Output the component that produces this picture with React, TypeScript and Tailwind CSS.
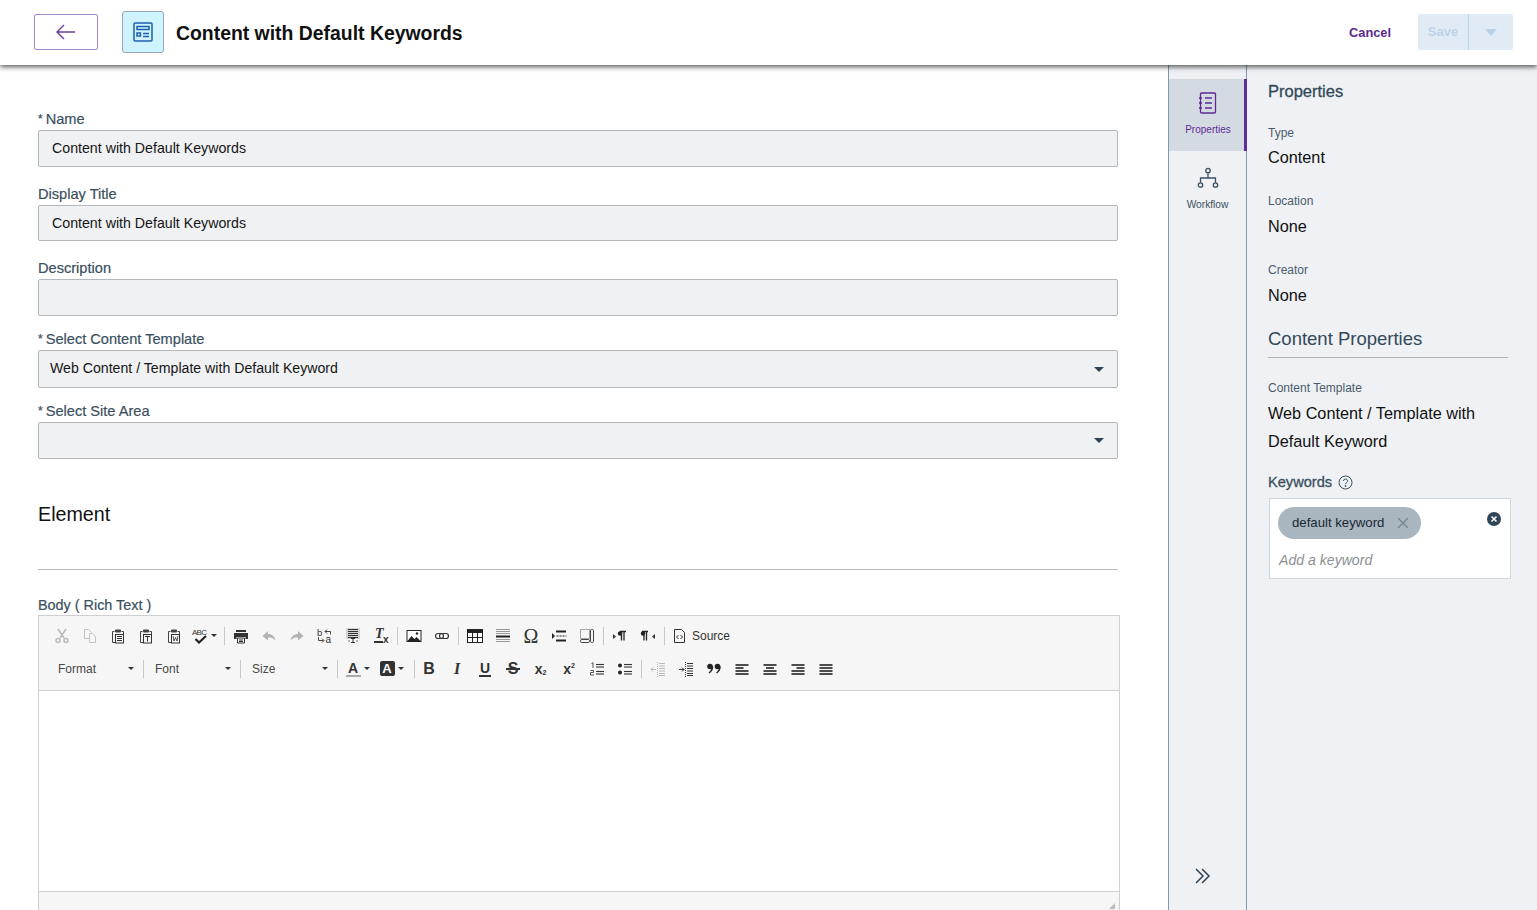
import React from "react";

const FF = "font-['Liberation_Sans',Arial,sans-serif]";

function Ic({ children, w = 16 }: { children: React.ReactNode; w?: number }) {
  return (
    <svg width={w} height={16} viewBox={`0 0 ${w} 16`} fill="none" stroke="#333" strokeWidth="1">
      {children}
    </svg>
  );
}

function TB({ children, w = "w-[28px]" }: { children: React.ReactNode; w?: string }) {
  return <div className={`${w} h-[24px] flex items-center justify-center shrink-0`}>{children}</div>;
}

const Sep = () => <div className="w-px h-[18px] bg-[#c8c8c8] mx-[2px] shrink-0" />;
const Tri = () => <span className="inline-block w-0 h-0 border-l-[3px] border-r-[3px] border-t-[3px] border-l-transparent border-r-transparent border-t-[#333] shrink-0" />;

const Paste = ({ inner }: { inner: React.ReactNode }) => (
  <Ic>
    <path d="M4.500 3.500h-2v11h3M11.500 3.500h2v3" stroke="#444" />
    <rect x="5" y="1.500" width="6" height="3" rx="1" fill="#444" stroke="none" />
    <rect x="5.500" y="6.500" width="8" height="8.500" fill="#f6f6f6" stroke="#333" />
    {inner}
  </Ic>
);

const lines = (ys: number[], x1: number, x2: number, sw = 1) =>
  ys.map((y) => <path key={y} d={`M${x1} ${y}H${x2}`} strokeWidth={sw} stroke="#333" />);

function Row1() {
  return (
    <div className="flex items-center h-[33px]">
      <TB>
        <Ic>
          <g stroke="#bbb" strokeWidth="1.600">
            <path d="M4 1l6 9M12 1L6 10" />
            <circle cx="4" cy="12.500" r="2" />
            <circle cx="12" cy="12.500" r="2" />
          </g>
        </Ic>
      </TB>
      <TB>
        <Ic>
          <g stroke="#c4c4c4" fill="#f6f6f6">
            <path d="M2.500 1.500h4l3 3v6h-7z" />
            <path d="M7.500 5.500h3l3 3v6h-6z" />
          </g>
        </Ic>
      </TB>
      <TB><Paste inner={lines([8.500, 10.500, 12.500], 7, 12)} /></TB>
      <TB><Paste inner={<path d="M7 8.500h5M9.500 8.500v5" stroke="#333" />} /></TB>
      <TB><Paste inner={<path d="M7 8l1 5 1.500-3.500L11 13l1-5" stroke="#333" strokeWidth=".8" />} /></TB>
      <TB w="w-[34px]">
        <div className="flex items-center gap-[1px] -ml-[1px]">
          <svg width={18} height={16} viewBox="0 0 18 16" fill="none">
            <text x="0" y="7" fontSize="8" fontFamily="Liberation Sans" fill="#333" textLength="15">ABC</text>
            <path d="M3.500 11l3.500 3.500L14 8" stroke="#222" strokeWidth="2.200" />
          </svg>
          <Tri />
        </div>
      </TB>
      <Sep />
      <TB>
        <Ic>
          <path d="M3 2h10v2H3z" fill="#333" stroke="none" />
          <path d="M1 5h14v6h-2.500v-2h-9v2H1z" fill="#333" stroke="none" />
          <path d="M4.500 10h7v5h-7z" fill="#f6f6f6" stroke="#333" />
          <path d="M6 12h4M6 13.500h4" stroke="#333" />
        </Ic>
      </TB>
      <TB>
        <Ic><path d="M7 3L1.500 8 7 12.500V9.500c3 0 5.500 .5 7.500 3-.5-4-3.500-6.500-7.500-6.500z" fill="#b4b4b4" stroke="none" /></Ic>
      </TB>
      <TB>
        <Ic><path d="M9 3l5.500 5L9 12.500V9.500c-3 0-5.500 .5-7.500 3 .5-4 3.500-6.500 7.500-6.500z" fill="#b4b4b4" stroke="none" /></Ic>
      </TB>
      <TB>
        <svg width={16} height={16} viewBox="0 0 16 16" fill="none">
          <text x="0" y="7.500" fontSize="9.500" fontFamily="Liberation Sans" fill="#333">b</text>
          <text x="8.500" y="15" fontSize="10" fontFamily="Liberation Sans" fill="#333">a</text>
          <path d="M8 3.500h5.500v3M10 1.500L8 3.500l2 2M1.500 9v3.500h5M5 10.500l2 2-2 2" stroke="#333" strokeWidth=".9" />
        </svg>
      </TB>
      <TB>
        <Ic>
          <rect x="1" y="0" width="14" height="11" fill="#d2d2d2" stroke="none" />
          {lines([1.500, 3.500, 5.500, 7.500, 9.500], 3, 13, 1)}
          <path d="M8 10v5M6 10.500h4M6 14.500h4" stroke="#333" />
          <path d="M3 13h2M11 13h2" stroke="#777" />
        </Ic>
      </TB>
      <TB>
        <span className="relative w-[16px] h-[16px] block">
          <span className="absolute left-[2px] top-[-2px] text-[14px] leading-[16px] italic font-bold font-['Liberation_Serif',serif] text-[#333]">T</span>
          <span className="absolute left-[1px] top-[13px] w-[9px] h-[2px] bg-[#333]" />
          <span className="absolute left-[10px] top-[7px] text-[10px] leading-[10px] font-bold text-[#333]">x</span>
        </span>
      </TB>
      <Sep />
      <TB>
        <Ic>
          <rect x="1" y="2.500" width="14" height="11" fill="#fff" stroke="#222" />
          <path d="M1.500 13l4-5 3 3 2-2 4 4z" fill="#222" stroke="none" />
          <circle cx="11" cy="5.500" r="1.200" fill="#222" stroke="none" />
        </Ic>
      </TB>
      <TB>
        <Ic>
          <rect x="1.500" y="5.500" width="8" height="5" rx="2.500" stroke="#333" strokeWidth="1.200" />
          <rect x="5.500" y="5.500" width="9" height="5" rx="2.500" stroke="#333" strokeWidth="1.200" />
        </Ic>
      </TB>
      <Sep />
      <TB>
        <Ic>
          <rect x=".5" y="1.500" width="15" height="13" fill="#fff" stroke="#222" />
          <rect x=".5" y="1.500" width="15" height="3.500" fill="#222" stroke="none" />
          <path d="M5.500 5v9M10.500 5v9M1 9.500h14" stroke="#222" />
        </Ic>
      </TB>
      <TB>
        <Ic>
          <path d="M1 1.500h14M1 3.500h14M1 5.500h14M1 11.500h14M1 13.500h14" stroke="#999" />
          <path d="M1 8.500h14" stroke="#222" strokeWidth="2" />
        </Ic>
      </TB>
      <TB><span className="text-[20px] leading-[16px] text-[#333] font-['Liberation_Serif',serif]">Ω</span></TB>
      <TB>
        <Ic>
          <path d="M1 5l3 3-3 3z" fill="#222" stroke="none" />
          <path d="M5 3.500h10M5 12.500h10" stroke="#222" strokeWidth="2" />
          <path d="M5.500 8h10" stroke="#222" strokeDasharray="2 1" />
        </Ic>
      </TB>
      <TB>
        <Ic>
          <path d="M1.500 1.500h9v9h-9z" stroke="#555" strokeDasharray="1 1" />
          <rect x="11.500" y="1.500" width="3" height="13" rx="1.200" stroke="#444" />
          <rect x="1.500" y="11.500" width="9" height="3" rx="1.200" stroke="#444" />
        </Ic>
      </TB>
      <Sep />
      <TB>
        <Ic>
          <path d="M1 6l3 2.500L1 11z" fill="#333" stroke="none" />
          <path d="M8 3.500h6M9.500 3.500v9M12 3.500v9" stroke="#222" strokeWidth="1.300" />
          <circle cx="8" cy="5.500" r="2.200" fill="#222" stroke="none" />
        </Ic>
      </TB>
      <TB>
        <Ic>
          <path d="M15 6l-3 2.500L15 11z" fill="#333" stroke="none" />
          <path d="M2 3.500h6M4 3.500v9M6.500 3.500v9" stroke="#222" strokeWidth="1.300" />
          <circle cx="3" cy="5.500" r="2.200" fill="#222" stroke="none" />
        </Ic>
      </TB>
      <Sep />
      <div className="flex items-center h-[24px] pl-[5px] gap-[4px] shrink-0">
        <Ic>
          <path d="M2.500 1.500h7l3 3v10h-10z" stroke="#333" fill="#f6f6f6" />
          <path d="M6.500 7l-2 2 2 2M8.500 7l2 2-2 2" stroke="#333" />
        </Ic>
        <span className="text-[12px] text-[#333]">Source</span>
      </div>
    </div>
  );
}

function Combo({ label, w }: { label: string; w: string }) {
  return (
    <div className={`${w} h-[24px] flex items-center justify-between pl-[9px] pr-[7px] shrink-0`}>
      <span className="text-[12px] text-[#484848]">{label}</span>
      <Tri />
    </div>
  );
}

function Row2() {
  return (
    <div className="flex items-center h-[33px]">
      <div className="w-[93px] h-[24px] flex items-center justify-between pl-[10px] pr-[7px] shrink-0">
        <span className="text-[12px] text-[#484848]">Format</span>
        <Tri />
      </div>
      <Sep />
      <Combo label="Font" w="w-[92px]" />
      <Sep />
      <Combo label="Size" w="w-[92px]" />
      <Sep />
      <TB w="w-[36px]">
        <div className="flex items-center gap-[3px] -ml-[1px]">
          <span className="flex flex-col items-center w-[15px]">
            <span className="text-[14px] leading-[14px] font-bold text-[#333]">A</span>
            <span className="w-[15px] h-[2px] bg-[#aaa]" />
          </span>
          <Tri />
        </div>
      </TB>
      <TB w="w-[36px]">
        <div className="flex items-center gap-[3px] -ml-[5px]">
          <span className="w-[15px] h-[15px] bg-[#333] rounded-[2px] flex items-center justify-center text-[13px] leading-[13px] font-bold text-white">A</span>
          <Tri />
        </div>
      </TB>
      <div className="w-px h-[18px] bg-[#c8c8c8] ml-[2px] shrink-0" />
      <TB><span className="text-[16px] leading-[16px] font-bold text-[#333]">B</span></TB>
      <TB><span className="text-[16px] leading-[16px] italic font-bold font-['Liberation_Serif',serif] text-[#333]">I</span></TB>
      <TB><span className="text-[14px] leading-[13px] font-bold text-[#333] border-b-2 border-[#333] px-[1px] mt-[1px]">U</span></TB>
      <TB>
        <span className="relative text-[16px] leading-[16px] font-bold text-[#333] block">
          S
          <span className="absolute -left-[2px] -right-[2px] top-[7px] h-[2px] bg-[#333]" />
        </span>
      </TB>
      <TB>
        <span className="flex items-end text-[#333] font-bold -ml-[1px]">
          <span className="text-[14px] leading-[14px]">x</span>
          <span className="text-[7px] leading-[7px]">2</span>
        </span>
      </TB>
      <TB>
        <span className="flex items-start text-[#333] font-bold">
          <span className="text-[14px] leading-[14px]">x</span>
          <span className="text-[7px] leading-[7px]">2</span>
        </span>
      </TB>
      <TB>
        <Ic>
          {lines([3.500, 6, 10.500, 13], 7, 15, 1.100)}
          <path d="M2.500 2.500l1.500-.8V7M1.500 9.500h3v2h-3v2.500h3.500" stroke="#444" strokeWidth=".9" />
        </Ic>
      </TB>
      <TB>
        <Ic>
          {lines([3.500, 6, 10.500, 13], 7, 15, 1.100)}
          <circle cx="3" cy="4.500" r="2" fill="#222" stroke="none" />
          <circle cx="3" cy="11.500" r="2" fill="#222" stroke="none" />
        </Ic>
      </TB>
      <Sep />
      <TB>
        <Ic>
          <g opacity=".3">
            {lines([2.500, 5, 7.500, 10, 12.500, 14.500], 9, 15, 1)}
            <path d="M7.500 1v15" stroke="#333" strokeDasharray="1 1" />
            <path d="M6 8.500H1M3 6.500l-2 2 2 2" stroke="#333" />
          </g>
        </Ic>
      </TB>
      <TB>
        <Ic>
          {lines([2.500, 5, 7.500, 10, 12.500, 14.500], 9, 15, 1)}
          <path d="M7.500 1v15" stroke="#333" strokeDasharray="1 1" />
          <path d="M1 8.500h5M4 6.500l2 2-2 2" stroke="#333" />
        </Ic>
      </TB>
      <TB>
        <Ic>
          <circle cx="4" cy="5.500" r="2.800" fill="#222" stroke="none" />
          <path d="M6.500 5.500c0 3-1.500 5-3.500 6.500" stroke="#222" strokeWidth="1.500" />
          <circle cx="11.500" cy="5.500" r="2.800" fill="#222" stroke="none" />
          <path d="M14 5.500c0 3-1.500 5-3.500 6.500" stroke="#222" strokeWidth="1.500" />
        </Ic>
      </TB>
      {[0, 1, 2, 3].map((i) => (
        <TB key={i}>
          <Ic>
            {[4, 7, 10, 13].map((y, r) => {
              const short = i !== 3 && r === 1;
              const len = short ? 8 : 13;
              const x1 = i === 0 || i === 3 ? 1.500 : i === 1 ? 8 - len / 2 : 14.500 - len;
              return <path key={y} d={`M${x1} ${y}h${len}`} stroke="#222" strokeWidth="1.600" />;
            })}
          </Ic>
        </TB>
      ))}
    </div>
  );
}

function FieldLabel({ label, req }: { label: string; req?: boolean }) {
  return (
    <div className="h-[20px] flex items-start text-[14.600px] leading-[18px] text-[#3b4f60] [-webkit-text-stroke:0.2px_#3b4f60]">
      {req && <span className="text-[12px] mr-[3px]">*</span>}
      {label}
    </div>
  );
}

function Field({ label, req, value, h, mb, tx = "" }: { label: string; req?: boolean; value?: string; h: string; mb: string; tx?: string }) {
  return (
    <div className={mb}>
      <FieldLabel label={label} req={req} />
      <div className={`${h} ${tx} bg-[#f0f1f3] border border-[#b4b8bc] rounded-[2px] flex items-center pl-[13px] text-[14.200px] text-[#161616]`}>
        {value}
      </div>
    </div>
  );
}

function SelectField({ label, value, h, mb }: { label: string; value?: string; h: string; mb: string }) {
  return (
    <div className={mb}>
      <FieldLabel label={label} req />
      <div className={`${h} bg-[#f0f1f3] border border-[#b4b8bc] rounded-[2px] flex items-center justify-between pl-[11px] pr-[13px] text-[14.150px] text-[#161616]`}>
        <span>{value}</span>
        <span className="w-0 h-0 border-l-[5px] border-r-[5px] border-t-[5px] border-l-transparent border-r-transparent border-t-[#2f4456]" />
      </div>
    </div>
  );
}

function Prop({ k, v, mb, gap }: { k: string; v: string; mb: string; gap: string }) {
  return (
    <div className={mb}>
      <div className="text-[12px] leading-[16px] text-[#4a5c6c]">{k}</div>
      <div className={`text-[16.250px] leading-[24px] text-[#111] ${gap}`}>{v}</div>
    </div>
  );
}

export default function App() {
  return (
    <div className={`h-[910px] w-[1537px] overflow-hidden bg-white flex flex-col ${FF}`}>
      <header className="relative z-10 h-[65px] shrink-0 bg-white shadow-[0_2px_5px_rgba(0,0,0,0.65)] flex items-center pl-[34px] pr-[24px] pb-[1px]">
        <button className="w-[64px] h-[36px] border border-[#a988c7] rounded-[2px] flex items-center justify-center">
          <svg width="22" height="18" viewBox="0 0 22 18" fill="none" stroke="#6b3fa0" strokeWidth="1.400">
            <path d="M2 9h18M9 2L2 9l7 7" />
          </svg>
        </button>
        <div className="ml-[24px] w-[42px] h-[42px] rounded-[3px] bg-[#cff4fe] border border-[#8fa9bb] flex items-center justify-center">
          <svg width="20" height="20" viewBox="0 0 20 20" fill="none" stroke="#1d5fa8" strokeWidth="1.500">
            <rect x="1" y="1" width="18" height="18" rx="1" />
            <rect x="4" y="4.500" width="12" height="3" />
            <rect x="4" y="11" width="3.500" height="3" />
            <path d="M10 11.500h6M10 14.500h6" />
          </svg>
        </div>
        <h1 className="ml-[12px] mt-[3px] text-[19.400px] font-bold text-[#111]">Content with Default Keywords</h1>
        <div className="ml-auto flex items-center">
          <span className="text-[12.800px] font-bold text-[#5b2a8f] mr-[27px] mt-[2px]">Cancel</span>
          <div className="w-[95px] h-[36px] bg-[#e1ebf5] rounded-[2px] flex items-center">
            <span className="w-[51px] text-center text-[13px] font-bold text-[#bfd3e8] border-r border-[#b9d3ea] leading-[36px]">Save</span>
            <span className="flex-1 flex justify-center">
              <span className="w-0 h-0 border-l-[6px] border-r-[6px] border-t-[7px] border-l-transparent border-r-transparent border-t-[#b6d1e9]" />
            </span>
          </div>
        </div>
      </header>

      <div className="flex-1 flex min-h-0">
        <main className="w-[1168px] shrink-0 pl-[38px] pr-[50px] pt-[45px] min-h-0">
          <Field label="Name" req value="Content with Default Keywords" h="h-[37px]" mb="mb-[18px]" />
          <Field label="Display Title" value="Content with Default Keywords" h="h-[36px]" tx="pt-[1px]" mb="mb-[18px]" />
          <Field label="Description" h="h-[37px]" mb="mb-[14px]" />
          <SelectField label="Select Content Template" value="Web Content / Template with Default Keyword" h="h-[38px]" mb="mb-[14px]" />
          <SelectField label="Select Site Area" h="h-[37px]" mb="mb-[41px]" />
          <div className="text-[19.700px] leading-[28px] text-[#111]">Element</div>
          <div className="h-px bg-[#b9bdc1] mt-[41px] mb-[26px]" />
          <div className="h-[19px] flex items-center text-[14.400px] text-[#3b4f60] [-webkit-text-stroke:0.2px_#3b4f60]">Body ( Rich Text )</div>
          <div className="w-[1082px] h-[400px] border border-[#cfcfcf] flex flex-col">
            <div className="bg-[#f6f6f6] border-b border-[#d1d1d1] pl-[9px] pt-[3px] h-[75px] shrink-0">
              <Row1 />
              <Row2 />
            </div>
            <div className="h-[200px] bg-white shrink-0" />
            <div className="flex-1 bg-[#f6f6f6] border-t border-[#d1d1d1] relative">
              <span className="absolute right-[4px] top-[11px] w-0 h-0 border-l-[6px] border-b-[6px] border-l-transparent border-b-[#bbb]" />
            </div>
          </div>
        </main>

        <nav className="w-[79px] shrink-0 bg-[#eff1f4] border-l border-r border-[#8199ab] flex flex-col pt-[14px]">
          <div className="h-[72px] bg-[#d3dae2] border-r-[3px] border-[#5f2a96] flex flex-col items-center pt-[13px] pl-[3px] -mr-px">
            <svg width="20" height="22" viewBox="0 0 20 22" fill="none" stroke="#5f2a96" strokeWidth="1.300">
              <rect x="2.500" y="1" width="15" height="20" rx="1" />
              <path d="M7 6h7M7 11h7M7 16h7M1 6h3M1 11h3M1 16h3" />
            </svg>
            <span className="text-[10px] leading-[12px] mt-[10px] text-[#5f2a96]">Properties</span>
          </div>
          <div className="h-[72px] flex flex-col items-center pt-[16px]">
            <svg width="22" height="22" viewBox="0 0 22 22" fill="none" stroke="#3a5060" strokeWidth="1.300">
              <circle cx="11" cy="3.500" r="2.200" />
              <circle cx="3.500" cy="18" r="2.200" />
              <circle cx="18.500" cy="18" r="2.200" />
              <path d="M11 5.700V11M3.500 15.800V11h15v4.800" />
            </svg>
            <span className="text-[10.200px] leading-[12px] mt-[10px] text-[#3a5060]">Workflow</span>
          </div>
          <div className="mt-auto pb-[26px] flex justify-center pr-[9px]">
            <svg width="16" height="16" viewBox="0 0 16 16" fill="none" stroke="#2f4456" strokeWidth="1.500">
              <path d="M1 1l7 7-7 7M7 1l7 7-7 7" />
            </svg>
          </div>
        </nav>

        <aside className="flex-1 bg-[#eff1f4] pl-[21px] pr-[29px] pt-[15px] min-w-0">
          <div className="text-[16.500px] leading-[22px] text-[#33495a] [-webkit-text-stroke:0.3px_#33495a]">Properties</div>
          <div className="mt-[23px]">
            <Prop k="Type" v="Content" mb="mb-[24px]" gap="mt-[4px]" />
            <Prop k="Location" v="None" mb="mb-[24px]" gap="mt-[5px]" />
            <Prop k="Creator" v="None" mb="mb-[19px]" gap="mt-[5px]" />
          </div>
          <div className="text-[18.500px] leading-[26px] text-[#33495a] pb-[5px] border-b border-[#a8b3bc]">Content Properties</div>
          <div className="mt-[22px] text-[12px] leading-[16px] text-[#4a5c6c]">Content Template</div>
          <div className="mt-[3px] text-[16.250px] leading-[28px] text-[#111]">
            Web Content / Template with
            <br />
            Default Keyword
          </div>
          <div className="mt-[18px] flex items-center gap-[6px] h-[20px] text-[14.600px] text-[#3a5060] [-webkit-text-stroke:0.3px_#3a5060]">
            Keywords
            <svg className="-mt-[1px]" width="15" height="15" viewBox="0 0 15 15" fill="none" stroke="#3a5060" strokeWidth="1">
              <circle cx="7.500" cy="7.500" r="6.500" />
              <path d="M5.500 6a2 2 0 1 1 3 1.700c-.7.400-1 .8-1 1.500" />
              <circle cx="7.500" cy="11" r=".5" fill="#3a5060" />
            </svg>
          </div>
          <div className="mt-[5px] ml-px -mr-[3px] h-[81px] bg-white border border-[#cfd6dc] relative pl-[8px] pt-[8px]">
            <div className="w-[143px] h-[32px] rounded-full bg-[#a9b6c0] flex items-center pl-[14px] gap-[13px]">
              <span className="text-[13.200px] text-[#1a2733]">default keyword</span>
              <svg width="12" height="12" viewBox="0 0 12 12" stroke="#75838f" strokeWidth="1.200">
                <path d="M1 1l10 10M11 1L1 11" />
              </svg>
            </div>
            <div className="mt-[11px] ml-px text-[14.100px] leading-[20px] italic text-[#8b8f93]">Add a keyword</div>
            <svg className="absolute right-[9px] top-[13px]" width="14" height="14" viewBox="0 0 14 14">
              <circle cx="7" cy="7" r="7" fill="#2f4456" />
              <path d="M4.500 4.500l5 5M9.500 4.500l-5 5" stroke="#fff" strokeWidth="1.600" />
            </svg>
          </div>
        </aside>
      </div>
    </div>
  );
}
